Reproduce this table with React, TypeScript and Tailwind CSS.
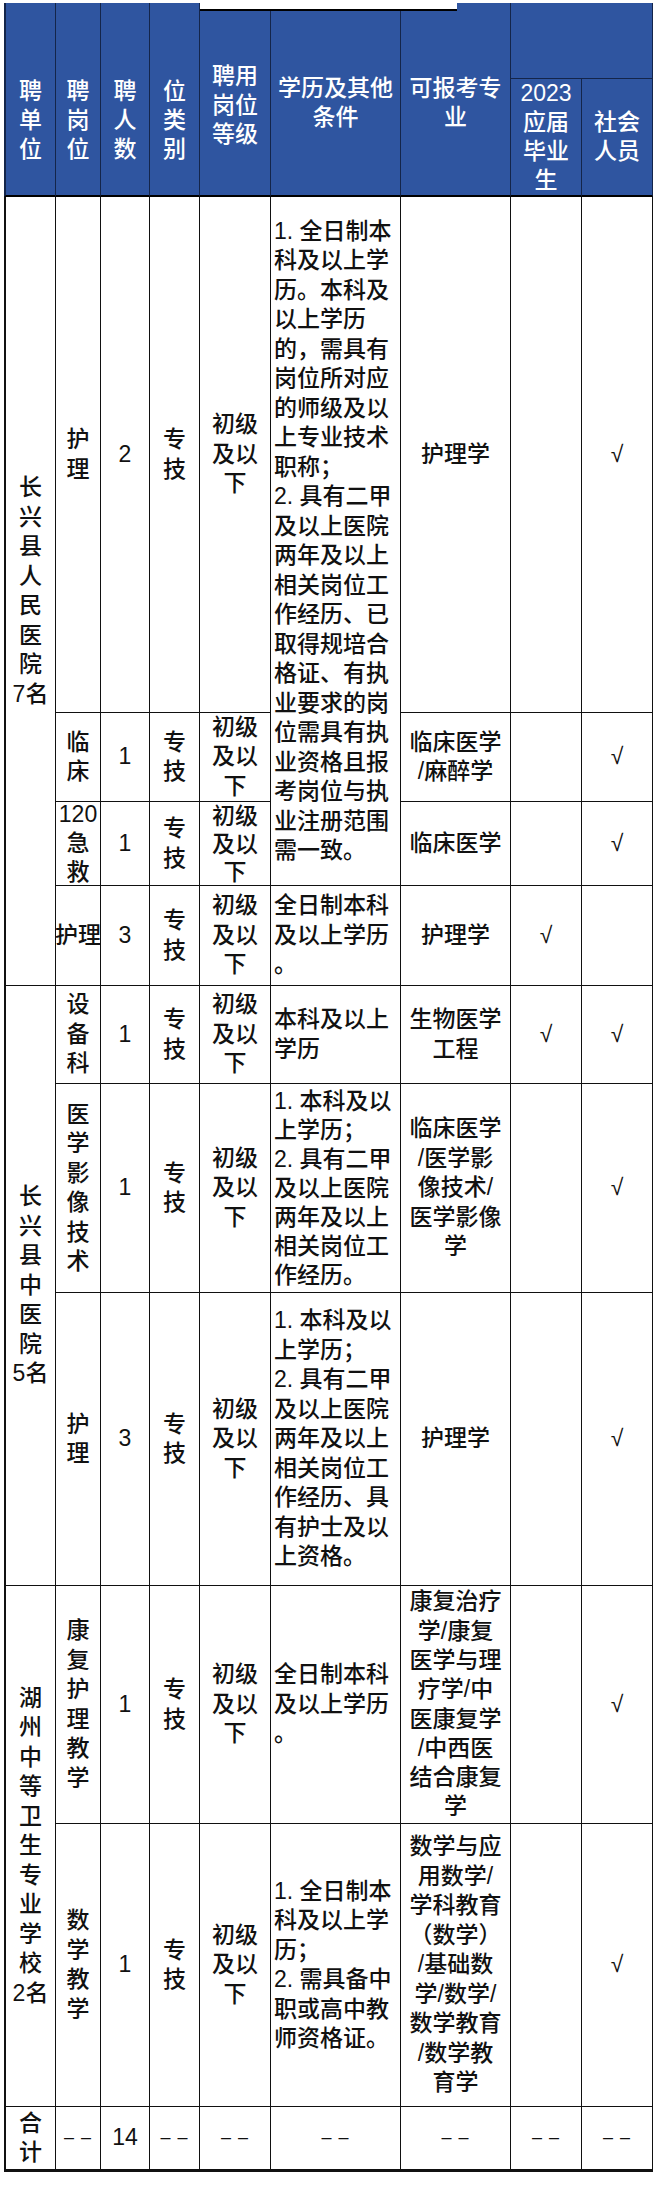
import React from 'react';
import clsx from 'clsx';

type Align = 'center' | 'left';

interface CellProps {
  lines: string[];
  span?: 1 | 2 | 3 | 4;
  align?: Align;
  first?: boolean;
  last?: boolean;
  bottom?: boolean;
  className?: string;
}

const rowSpan: Record<number, string> = {
  1: '',
  2: 'row-span-2',
  3: 'row-span-3',
  4: 'row-span-4',
};

// body cell: black grid lines, text stacked line by line like the source sheet
const Cell: React.FC<CellProps> = ({ lines, span = 1, align = 'center', first, last, bottom, className }) => (
  <div
    className={clsx(
      'flex flex-col justify-center border-r-[1.5px] border-b-[1.5px] border-[#111] text-[#111]',
      rowSpan[span],
      align === 'left' ? 'items-start pl-[3px]' : 'items-center',
      first && 'border-l-2',
      last && 'border-r-2',
      bottom && 'border-b-[3px]',
      className
    )}
  >
    {lines.map((l, i) => (
      <span key={i} className="whitespace-nowrap">
        {l}
      </span>
    ))}
  </div>
);

const Head: React.FC<{ lines: string[]; className?: string }> = ({ lines, className }) => (
  <div
    className={clsx(
      'flex flex-col items-center justify-center bg-[#2f55a0] text-white border-r-[1.5px] border-[#14254a] leading-[29px]',
      className
    )}
  >
    {lines.map((l, i) => (
      <span key={i} className="whitespace-nowrap">
        {l}
      </span>
    ))}
  </div>
);

const Dash: React.FC<{ first?: boolean; last?: boolean }> = ({ first, last }) => (
  <div
    className={clsx(
      'flex items-center justify-center border-r-[1.5px] border-b-[3px] border-[#111] text-[#111]',
      first && 'border-l-2',
      last && 'border-r-2'
    )}
  >
    <span className="whitespace-nowrap text-[18px] tracking-[1px]">– –</span>
  </div>
);

const grade = ['初级', '及以', '下'];
const tech = ['专', '技'];
const check = ['√'];

export default function App() {
  return (
    <div className="relative min-h-[2194px] bg-white pt-[3px] pl-[4px] font-['Liberation_Sans_Narrow','Liberation_Sans','Noto_Sans_CJK_SC',sans-serif] text-[23px] font-medium leading-[29.5px]">
      {/* white notch at the top of the scanned header */}
      <div className="absolute left-[200px] top-0 h-[11px] w-[257px] bg-white border-b-2 border-black" />

      <div className="grid w-[649px] grid-cols-[52px_45px_49px_50px_71px_130px_110px_71px_71px] grid-rows-[76px_118px_516px_89px_84px_100px_98px_209px_293px_238px_283px_65px]">
        {/* header */}
        <Head lines={['聘', '单', '位']} className="row-span-2 pt-[42px] border-l-2 border-b-2 border-b-black" />
        <Head lines={['聘', '岗', '位']} className="row-span-2 pt-[42px] border-b-2 border-b-black" />
        <Head lines={['聘', '人', '数']} className="row-span-2 pt-[42px] border-b-2 border-b-black" />
        <Head lines={['位', '类', '别']} className="row-span-2 pt-[42px] border-b-2 border-b-black" />
        <Head lines={['聘用', '岗位', '等级']} className="row-span-2 pt-[12px] border-b-2 border-b-black" />
        <Head lines={['学历及其他', '条件']} className="row-span-2 pt-[8px] border-b-2 border-b-black" />
        <Head lines={['可报考专', '业']} className="row-span-2 pt-[8px] border-b-2 border-b-black" />
        <Head lines={[]} className="col-span-2 border-b-[1.5px] border-r-2" />
        <Head lines={['2023', '应届', '毕业', '生']} className="border-b-2 border-b-black" />
        <Head lines={['社会', '人员']} className="border-r-2 border-b-2 border-b-black" />

        {/* 长兴县人民医院 */}
        <Cell lines={['长', '兴', '县', '人', '民', '医', '院', '7名']} span={4} first />
        <Cell lines={['护', '理']} />
        <Cell lines={['2']} />
        <Cell lines={tech} />
        <Cell lines={grade} />
        <Cell
          span={3}
          align="left"
          lines={[
            '1. 全日制本',
            '科及以上学',
            '历。本科及',
            '以上学历',
            '的，需具有',
            '岗位所对应',
            '的师级及以',
            '上专业技术',
            '职称；',
            '2. 具有二甲',
            '及以上医院',
            '两年及以上',
            '相关岗位工',
            '作经历、已',
            '取得规培合',
            '格证、有执',
            '业要求的岗',
            '位需具有执',
            '业资格且报',
            '考岗位与执',
            '业注册范围',
            '需一致。',
          ]}
        />
        <Cell lines={['护理学']} />
        <Cell lines={[]} />
        <Cell lines={check} last />

        <Cell lines={['临', '床']} />
        <Cell lines={['1']} />
        <Cell lines={tech} />
        <Cell lines={grade} />
        <Cell lines={['临床医学', '/麻醉学']} />
        <Cell lines={[]} />
        <Cell lines={check} last />

        <Cell lines={['120', '急', '救']} className="leading-[29px]" />
        <Cell lines={['1']} />
        <Cell lines={tech} />
        <Cell lines={grade} className="leading-[28px]" />
        <Cell lines={['临床医学']} />
        <Cell lines={[]} />
        <Cell lines={check} last />

        <Cell lines={['护理']} />
        <Cell lines={['3']} />
        <Cell lines={tech} />
        <Cell lines={grade} />
        <Cell lines={['全日制本科', '及以上学历', '。']} align="left" />
        <Cell lines={['护理学']} />
        <Cell lines={check} />
        <Cell lines={[]} last />

        {/* 长兴县中医院 */}
        <Cell lines={['长', '兴', '县', '中', '医', '院', '5名']} span={3} first />
        <Cell lines={['设', '备', '科']} />
        <Cell lines={['1']} />
        <Cell lines={tech} />
        <Cell lines={grade} />
        <Cell lines={['本科及以上', '学历']} align="left" />
        <Cell lines={['生物医学', '工程']} />
        <Cell lines={check} />
        <Cell lines={check} last />

        <Cell lines={['医', '学', '影', '像', '技', '术']} />
        <Cell lines={['1']} />
        <Cell lines={tech} />
        <Cell lines={grade} />
        <Cell
          align="left"
          className="leading-[29px]"
          lines={['1. 本科及以', '上学历；', '2. 具有二甲', '及以上医院', '两年及以上', '相关岗位工', '作经历。']}
        />
        <Cell lines={['临床医学', '/医学影', '像技术/', '医学影像', '学']} />
        <Cell lines={[]} />
        <Cell lines={check} last />

        <Cell lines={['护', '理']} />
        <Cell lines={['3']} />
        <Cell lines={tech} />
        <Cell lines={grade} />
        <Cell
          align="left"
          lines={[
            '1. 本科及以',
            '上学历；',
            '2. 具有二甲',
            '及以上医院',
            '两年及以上',
            '相关岗位工',
            '作经历、具',
            '有护士及以',
            '上资格。',
          ]}
        />
        <Cell lines={['护理学']} />
        <Cell lines={[]} />
        <Cell lines={check} last />

        {/* 湖州中等卫生专业学校 */}
        <Cell lines={['湖', '州', '中', '等', '卫', '生', '专', '业', '学', '校', '2名']} span={2} first />
        <Cell lines={['康', '复', '护', '理', '教', '学']} />
        <Cell lines={['1']} />
        <Cell lines={tech} />
        <Cell lines={grade} />
        <Cell lines={['全日制本科', '及以上学历', '。']} align="left" />
        <Cell
          className="leading-[29.3px]"
          lines={['康复治疗', '学/康复', '医学与理', '疗学/中', '医康复学', '/中西医', '结合康复', '学']}
        />
        <Cell lines={[]} />
        <Cell lines={check} last />

        <Cell lines={['数', '学', '教', '学']} />
        <Cell lines={['1']} />
        <Cell lines={tech} />
        <Cell lines={grade} />
        <Cell
          align="left"
          lines={['1. 全日制本', '科及以上学', '历；', '2. 需具备中', '职或高中教', '师资格证。']}
        />
        <Cell
          lines={['数学与应', '用数学/', '学科教育', '（数学）', '/基础数', '学/数学/', '数学教育', '/数学教', '育学']}
        />
        <Cell lines={[]} />
        <Cell lines={check} last />

        {/* 合计 */}
        <Cell lines={['合', '计']} first bottom />
        <Dash />
        <Cell lines={['14']} bottom />
        <Dash />
        <Dash />
        <Dash />
        <Dash />
        <Dash />
        <Dash last />
      </div>
    </div>
  );
}
